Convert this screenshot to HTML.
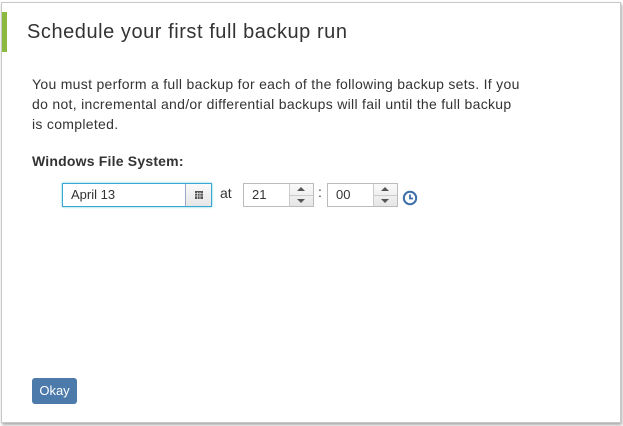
<!DOCTYPE html>
<html><head><style>
body{margin:0;width:623px;height:426px;background:#fff;font-family:"Liberation Sans",sans-serif;position:relative;overflow:hidden}
.dlg{position:absolute;left:1px;top:2px;width:618px;height:419px;border:1px solid #c8c8c8;box-shadow:1px 2px 3px rgba(0,0,0,.35);background:#fff}
.bar{position:absolute;left:2px;top:12px;width:5px;height:40px;background:#8bb83f}
.t{position:absolute;left:27px;top:21px;font-size:20px;color:#333;letter-spacing:0.55px}
.p{position:absolute;left:32px;top:74px;font-size:14px;line-height:20px;color:#333;white-space:nowrap;letter-spacing:0.3px}
.lb{position:absolute;left:32px;top:153px;font-size:14px;font-weight:bold;color:#333;letter-spacing:0.2px}
.in{position:absolute;box-sizing:border-box;border:1px solid #bbb;background:#fff;font-size:13px;color:#333;height:24px;line-height:22px;padding-left:8px}
.sp{position:absolute;box-sizing:border-box;border-left:1px solid #ccc;background:linear-gradient(#fafafa,#e6e6e6);}
.ok{position:absolute;left:32px;top:378px;width:45px;height:26px;background:#4c7aab;border-radius:3px;color:#fff;font-size:13px;text-align:center;line-height:26px}
</style></head><body>
<div class="dlg"></div>
<div class="bar"></div>
<div class="t">Schedule your first full backup run</div>
<div class="p">You must perform a full backup for each of the following backup sets. If you<br>do not, incremental and/or differential backups will fail until the full backup<br>is completed.</div>
<div class="lb">Windows File System:</div>
<div class="in" style="left:62px;top:183px;width:150px;border:1px solid #3aa7d8;box-shadow:0 0 2px #6cc">April 13</div>
<div class="sp" style="left:185px;top:184px;width:26px;height:22px;border-left:1px solid #9ac"><svg style="position:absolute;left:9px;top:7px" width="8" height="8" viewBox="0 0 8 8"><path d="M0 0H8V8H0Z" fill="#555"/><path d="M0 2.5H8M0 5H8M2.5 1V8M5 1V8" stroke="#ddd" stroke-width="0.8"/></svg></div>
<div style="position:absolute;left:220px;top:185px;font-size:14px;color:#333">at</div>
<div class="in" style="left:243px;top:183px;width:71px">21</div>
<div class="sp" style="left:289px;top:184px;width:24px;height:22px;border-left:1px solid #ccc"><div style="position:absolute;left:7px;top:3px;border:4px solid transparent;border-bottom:4px solid #555;border-top:0"></div><div style="height:1px;background:#ccc;position:absolute;top:11px;left:0;right:0"></div><div style="position:absolute;left:7px;top:15px;border:4px solid transparent;border-top:4px solid #555;border-bottom:0"></div></div>
<div style="position:absolute;left:318px;top:184px;font-size:14px;color:#333">:</div>
<div class="in" style="left:327px;top:183px;width:71px">00</div>
<div class="sp" style="left:373px;top:184px;width:24px;height:22px"><div style="position:absolute;left:7px;top:3px;border:4px solid transparent;border-bottom:4px solid #555;border-top:0"></div><div style="height:1px;background:#ccc;position:absolute;top:11px;left:0;right:0"></div><div style="position:absolute;left:7px;top:15px;border:4px solid transparent;border-top:4px solid #555;border-bottom:0"></div></div>
<svg style="position:absolute;left:402px;top:190px" width="16" height="16" viewBox="0 0 16 16"><circle cx="8" cy="8" r="6.2" fill="none" stroke="#3d6fa8" stroke-width="2"/><path d="M8 4.5V8.5H11" fill="none" stroke="#3d6fa8" stroke-width="1.8"/></svg>
<div class="ok">Okay</div>
</body></html>
